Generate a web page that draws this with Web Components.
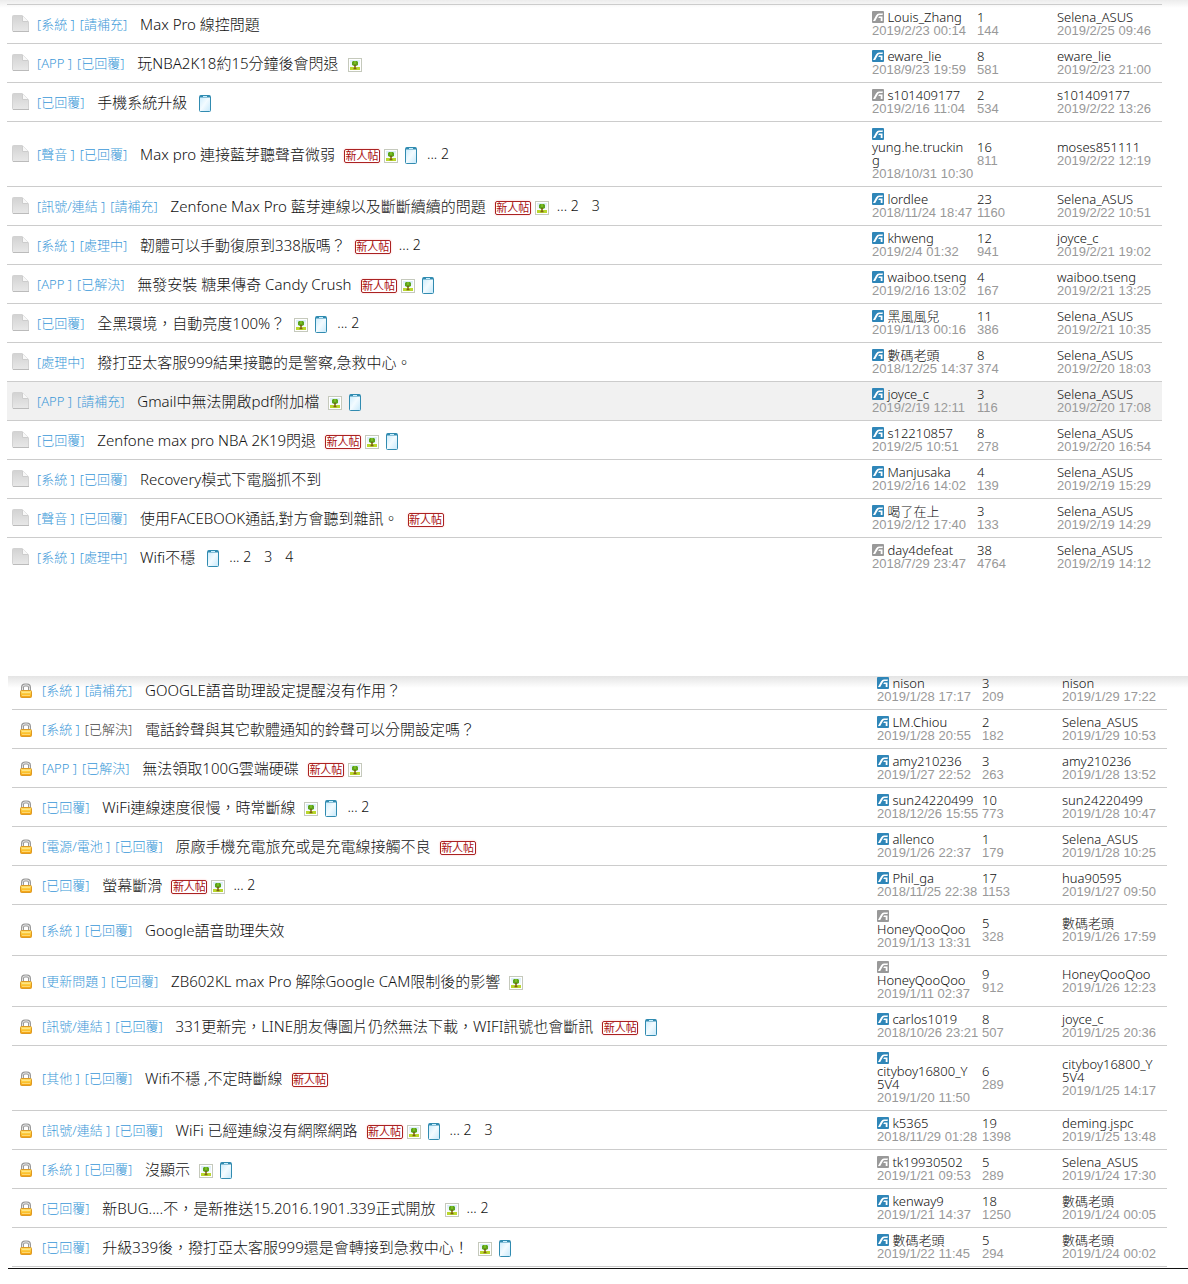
<!DOCTYPE html>
<html lang="zh-Hant">
<head>
<meta charset="utf-8">
<meta name="viewport" content="width=device-width, initial-scale=1">
<title>ZenFone Max Pro</title>
<style>
    body {
        margin: 0;
        background: #fff;
        color: #111;
        font-family: "Noto Sans", "Noto Sans CJK TC", sans-serif;
        font-weight: 300;
    }
</style>
</head>
<body>
<forum-panel>
    <thread-list name="open" status="page"></thread-list>
</forum-panel>
<forum-panel continued>
    <thread-list name="locked" status="lock"></thread-list>
</forum-panel>

<script>
'use strict';

(function() {
    // tags, title, marks, extra pages, author, active member, posted, replies, views, last poster, last post, row kind
    const threads = {
        open: [
            ['系統 |請補充', 'Max Pro 線控問題', '', '', 'Louis_Zhang', 0, '2019/2/23 00:14', 1, 144, 'Selena_ASUS', '2019/2/25 09:46'],
            ['APP |已回覆', '玩NBA2K18約15分鐘後會閃退', 'image', '', 'eware_lie', 1, '2018/9/23 19:59', 8, 581, 'eware_lie', '2019/2/23 21:00'],
            ['已回覆', '手機系統升級', 'phone', '', 's101409177', 0, '2019/2/16 11:04', 2, 534, 's101409177', '2019/2/22 13:26'],
            ['聲音 |已回覆', 'Max pro 連接藍芽聽聲音微弱', 'new image phone', '2', 'yung.he.trucking', 1, '2018/10/31 10:30', 16, 811, 'moses851111', '2019/2/22 12:19', 'tall'],
            ['訊號/連結 |請補充', 'Zenfone Max Pro 藍芽連線以及斷斷續續的問題', 'new image', '2 3', 'lordlee', 1, '2018/11/24 18:47', 23, 1160, 'Selena_ASUS', '2019/2/22 10:51'],
            ['系統 |處理中', '韌體可以手動復原到338版嗎？', 'new', '2', 'khweng', 1, '2019/2/4 01:32', 12, 941, 'joyce_c', '2019/2/21 19:02'],
            ['APP |已解決', '無發安裝 糖果傳奇 Candy Crush', 'new image phone', '', 'waiboo.tseng', 1, '2019/2/16 13:02', 4, 167, 'waiboo.tseng', '2019/2/21 13:25'],
            ['已回覆', '全黑環境，自動亮度100%？', 'image phone', '2', '黑風風兒', 1, '2019/1/13 00:16', 11, 386, 'Selena_ASUS', '2019/2/21 10:35'],
            ['處理中', '撥打亞太客服999結果接聽的是警察,急救中心。', '', '', '數碼老頭', 1, '2018/12/25 14:37', 8, 374, 'Selena_ASUS', '2019/2/20 18:03'],
            ['APP |請補充', 'Gmail中無法開啟pdf附加檔', 'image phone', '', 'joyce_c', 1, '2019/2/19 12:11', 3, 116, 'Selena_ASUS', '2019/2/20 17:08', 'current'],
            ['已回覆', 'Zenfone max pro NBA 2K19閃退', 'new image phone', '', 's12210857', 1, '2019/2/5 10:51', 8, 278, 'Selena_ASUS', '2019/2/20 16:54'],
            ['系統 |已回覆', 'Recovery模式下電腦抓不到', '', '', 'Manjusaka', 1, '2019/2/16 14:02', 4, 139, 'Selena_ASUS', '2019/2/19 15:29'],
            ['聲音 |已回覆', '使用FACEBOOK通話,對方會聽到雜訊。', 'new', '', '喝了在上', 1, '2019/2/12 17:40', 3, 133, 'Selena_ASUS', '2019/2/19 14:29'],
            ['系統 |處理中', 'Wifi不穩', 'phone', '2 3 4', 'day4defeat', 0, '2018/7/29 23:47', 38, 4764, 'Selena_ASUS', '2019/2/19 14:12']
        ],
        locked: [
            ['系統 |請補充', 'GOOGLE語音助理設定提醒沒有作用？', '', '', 'nison', 1, '2019/1/28 17:17', 3, 209, 'nison', '2019/1/29 17:22'],
            ['系統 |已解決', '電話鈴聲與其它軟體通知的鈴聲可以分開設定嗎？', '', '', 'LM.Chiou', 1, '2019/1/28 20:55', 2, 182, 'Selena_ASUS', '2019/1/29 10:53', 'visited'],
            ['APP |已解決', '無法領取100G雲端硬碟', 'new image', '', 'amy210236', 1, '2019/1/27 22:52', 3, 263, 'amy210236', '2019/1/28 13:52'],
            ['已回覆', 'WiFi連線速度很慢，時常斷線', 'image phone', '2', 'sun24220499', 1, '2018/12/26 15:55', 10, 773, 'sun24220499', '2019/1/28 10:47'],
            ['電源/電池 |已回覆', '原廠手機充電旅充或是充電線接觸不良', 'new', '', 'allenco', 1, '2019/1/26 22:37', 1, 179, 'Selena_ASUS', '2019/1/28 10:25'],
            ['已回覆', '螢幕斷滑', 'new image', '2', 'Phil_ga', 1, '2018/11/25 22:38', 17, 1153, 'hua90595', '2019/1/27 09:50'],
            ['系統 |已回覆', 'Google語音助理失效', '', '', 'HoneyQooQoo', 0, '2019/1/13 13:31', 5, 328, '數碼老頭', '2019/1/26 17:59'],
            ['更新問題 |已回覆', 'ZB602KL max Pro 解除Google CAM限制後的影響', 'image', '', 'HoneyQooQoo', 0, '2019/1/11 02:37', 9, 912, 'HoneyQooQoo', '2019/1/26 12:23'],
            ['訊號/連結 |已回覆', '331更新完，LINE朋友傳圖片仍然無法下載，WIFI訊號也會斷訊', 'new phone', '', 'carlos1019', 1, '2018/10/26 23:21', 8, 507, 'joyce_c', '2019/1/25 20:36'],
            ['其他 |已回覆', 'Wifi不穩 ,不定時斷線', 'new', '', 'cityboy16800_Y5V4', 1, '2019/1/20 11:50', 6, 289, 'cityboy16800_Y5V4', '2019/1/25 14:17', 'tall'],
            ['訊號/連結 |已回覆', 'WiFi 已經連線沒有網際網路', 'new image phone', '2 3', 'k5365', 1, '2018/11/29 01:28', 19, 1398, 'deming.jspc', '2019/1/25 13:48'],
            ['系統 |已回覆', '沒顯示', 'image phone', '', 'tk19930502', 0, '2019/1/21 09:53', 5, 289, 'Selena_ASUS', '2019/1/24 17:30'],
            ['已回覆', '新BUG....不，是新推送15.2016.1901.339正式開放', 'image', '2', 'kenway9', 1, '2019/1/21 14:37', 18, 1250, '數碼老頭', '2019/1/24 00:05'],
            ['已回覆', '升級339後，撥打亞太客服999還是會轉接到急救中心！', 'image phone', '', '數碼老頭', 1, '2019/1/22 11:45', 5, 294, '數碼老頭', '2019/1/24 00:02']
        ]
    };

    const icons = {
        page: `<svg width="18" height="18" viewBox="0 0 18 18">
            <defs><linearGradient id="g" x2="0" y2="1"><stop stop-color="#d2d2d2"/><stop offset="1" stop-color="#e8e8e8"/></linearGradient></defs>
            <path d="M1.500.5h9l6 6v10h-15q-1 0-1-1v-14q0-1 1-1z" fill="url(#g)" stroke="#d2d2d2"/>
            <path d="M10.500.5l6 6h-6z" fill="#f8f8f8" stroke="#e4e4e4"/>
            <path d="M10.500 1v5.500H16" fill="none" stroke="#ccc"/>
            <path d="M1 16.500h16" stroke="#bbb"/></svg>`,
        lock: `<svg width="14" height="16" viewBox="0 0 14 16">
            <defs><linearGradient id="g" x2="0" y2="1"><stop stop-color="#fee277"/><stop offset=".5" stop-color="#fdc735"/><stop offset="1" stop-color="#f49b0b"/></linearGradient></defs>
            <path d="M3.500 8V4.500Q3.500 2 6 2h2q2.500 0 2.500 2.500V8" fill="none" stroke="#999" stroke-width="3"/>
            <path d="M3.500 8V4.500Q3.500 2 6 2h2q2.500 0 2.500 2.500V8" fill="none" stroke="#e8e8e8"/>
            <rect x="1.500" y="7.500" width="11" height="7" rx="1" fill="url(#g)" stroke="#dc9a25"/>
            <path d="M3 9.500h8M3 12.500h8" stroke="#fff1a8" opacity=".6"/></svg>`,
        image: `<svg width="14" height="14" viewBox="0 0 14 14">
            <defs><linearGradient id="g" x2="0" y2="1"><stop stop-color="#d8edf8"/><stop offset="1" stop-color="#fff"/></linearGradient></defs>
            <rect x=".5" y=".5" width="13" height="13" fill="#fff" stroke="#c5c9bc"/>
            <path d="M2 2h10v8H2z" fill="url(#g)"/><path d="M2 9h10v3H2z" fill="#b9d72c"/>
            <path d="M5 3h4l1 1v3L8 8H6L4 7V4z" fill="#5ba31b"/><path d="M6 3h2v3H6z" fill="#79ba22"/>
            <path d="M6.500 7h1v3l1 1h-3l1-1z" fill="#7b5a13" stroke="#7b5a13" stroke-width=".5"/></svg>`,
        phone: `<svg width="12" height="17" viewBox="0 0 12 17">
            <defs><linearGradient id="g" x2="1" y2="1"><stop stop-color="#c8eafb"/><stop offset=".5" stop-color="#f3fbff"/><stop offset="1" stop-color="#c5e8fa"/></linearGradient></defs>
            <rect x=".5" y=".5" width="11" height="16" rx="1" fill="url(#g)" stroke="#318bb0"/>
            <path d="M1 1.500h10" stroke="#318bb0" stroke-width="2"/><path d="M4 1.500h4" stroke="#c9efff"/></svg>`,
        member: `<svg width="12" height="12" viewBox="0 0 12 12">
            <rect width="12" height="12" rx="1" fill="currentColor"/>
            <path d="M1 10L4 4.500Q5.200 2.500 7 2.500h4L10.500 4H7.800Q6.500 4 5.700 5.400L3.200 10z" fill="#fff"/>
            <path d="M7 5.500h3.500V10H8.700V7H6.300z" fill="#fff"/></svg>`
    };

    class ForumPanel extends HTMLElement {
        constructor() {
            super();
            this.attachShadow({ mode: 'open' }).innerHTML = `
            <style>
                :host {
                    display: block;
                    padding: 4px 26px 0 7px;
                    background: linear-gradient(#ececec, #fff) top / 100% 8px no-repeat;
                }

                :host([continued]) {
                    margin: 99px 0 0 8px;
                    padding: 0 21px 1px 4px;
                    border-bottom: 1px solid #111;
                    background: linear-gradient(#e4e4e4, #fff) top / 100% 12px no-repeat;
                    overflow: hidden;
                }

                /* the first row continues from above the panel edge */
                :host([continued]) ::slotted(thread-list) {
                    margin-top: -5px;
                }
            </style>
            <slot></slot>
            `;
        }
    }

    class ForumIcon extends HTMLElement {
        constructor() {
            super();
            this.attachShadow({ mode: 'open' });
        }

        connectedCallback() {
            this.shadowRoot.innerHTML = `
            <style>
                :host {
                    display: inline-flex;
                    flex: none;
                    color: #2f86b8;
                }

                :host([muted]) {
                    color: #999;
                }

                svg {
                    display: block;
                }
            </style>
            ${icons[this.getAttribute('name')]}
            `;
        }
    }

    class NewcomerBadge extends HTMLElement {
        constructor() {
            super();
            this.attachShadow({ mode: 'open' }).innerHTML = `
            <style>
                :host {
                    box-sizing: border-box;
                    flex: none;
                    width: 36px;
                    height: 14px;
                    border: 1px solid #a22;
                    border-radius: 2px;
                    box-shadow: 0 0 2px #fbb;
                    color: #a11;
                    font-size: 11px;
                    font-weight: 400;
                    line-height: 12px;
                    display: flex;
                    justify-content: center;
                }
            </style>
            <span>新人帖</span>
            `;
        }
    }

    class PostMeta extends HTMLElement {
        constructor() {
            super();
            this.attachShadow({ mode: 'open' });
        }

        connectedCallback() {
            const member = this.getAttribute('member');
            this.shadowRoot.innerHTML = `
            <style>
                :host {
                    display: block;
                    font-size: 13px;
                    line-height: 13px;
                }

                .name {
                    overflow-wrap: break-word;
                }

                a {
                    color: inherit;
                    text-decoration: none;
                }

                forum-icon {
                    height: 12px;
                    margin-top: -2px;
                    vertical-align: -1px;
                }

                .detail {
                    color: #999;
                    font-family: "Liberation Sans", Arial, sans-serif;
                    font-weight: 400;
                    white-space: nowrap;
                }
            </style>
            <div class="name">${member !== null
                ? `<forum-icon name="member" ${member === '0' ? 'muted' : ''}></forum-icon> `
                : ''}${this.hasAttribute('plain') ? '<slot></slot>' : '<a href="#"><slot></slot></a>'}</div>
            <div class="detail">${this.getAttribute('detail')}</div>
            `;
        }
    }

    class ThreadSubject extends HTMLElement {
        constructor() {
            super();
            this.attachShadow({ mode: 'open' });
        }

        connectedCallback() {
            const tags = this.getAttribute('tags').split('|');
            const marks = this.getAttribute('marks').split(' ').filter(Boolean);
            const pages = this.getAttribute('pages').split(' ').filter(Boolean);

            this.shadowRoot.innerHTML = `
            <style>
                :host {
                    display: flex;
                    align-items: center;
                    font-size: 15px;
                    line-height: 20px;
                }

                a {
                    color: inherit;
                    text-decoration: none;
                }

                .tags {
                    display: flex;
                    gap: 5px;
                    margin-right: 13px;
                    padding-top: 1px;
                    color: #3a98d8;
                    font-size: 13px;
                }

                :host([visited]) .tags a:last-child {
                    color: #444;
                }

                .marks {
                    display: flex;
                    align-items: center;
                    gap: 4px;
                    margin-left: 9px;
                    padding-top: 4px;
                }

                forum-icon[name="phone"] {
                    margin: 0 2px 0 3px;
                }

                .pages {
                    display: flex;
                    gap: 13px;
                    margin-left: 8px;
                    font-size: 14px;
                }
            </style>
            <span class="tags">${tags.map(tag => `<a href="#">[${tag}]</a>`).join('')}</span>
            <a href="#"><slot></slot></a>
            ${marks.length
                ? `<span class="marks">${marks.map(mark => mark === 'new'
                    ? '<newcomer-badge></newcomer-badge>'
                    : `<forum-icon name="${mark}"></forum-icon>`).join('')}</span>`
                : ''}
            ${pages.length
                ? `<span class="pages">${pages.map((page, i) => `<span>${i ? '' : '... '}<a href="#">${page}</a></span>`).join('')}</span>`
                : ''}
            `;
        }
    }

    class ThreadList extends HTMLElement {
        constructor() {
            super();
            this.attachShadow({ mode: 'open' });
        }

        connectedCallback() {
            const status = this.getAttribute('status');
            this.shadowRoot.innerHTML = `
            <style>
                :host {
                    display: block;
                }

                table {
                    width: 100%;
                    table-layout: fixed;
                    border-spacing: 0;
                }

                :host([name="open"]) table {
                    border-top: 1px solid #ccc;
                }

                td {
                    box-sizing: border-box;
                    height: 39px;
                    padding: 5px 0 6px;
                    border-bottom: 1px solid #ccc;
                    vertical-align: middle;
                }

                :host([name="open"]) tr:last-child td {
                    border-bottom-color: transparent;
                }

                .tall td {
                    height: 65px;
                }

                .current {
                    background: #f1f1f1;
                }

                .status {
                    width: 30px;
                }

                .status forum-icon {
                    display: flex;
                    padding-left: 5px;
                }

                .status forum-icon[name="lock"] {
                    padding: 3px 0 0 7px;
                }

                .author {
                    width: 105px;
                    padding-right: 8px;
                }

                .count {
                    width: 80px;
                }

                .last {
                    width: 105px;
                    padding-right: 8px;
                }
            </style>
            <table>
                <tbody>
                ${threads[this.getAttribute('name')].map(([tags, title, marks, pages, author, active, posted, replies, views, last, lastDate, kind]) => `
                    <tr class="${kind || ''}">
                        <td class="status"><forum-icon name="${status}"></forum-icon></td>
                        <td><thread-subject tags="${tags}" marks="${marks}" pages="${pages}" ${kind === 'visited' ? 'visited' : ''}>${title}</thread-subject></td>
                        <td class="author"><post-meta member="${active}" detail="${posted}">${author}</post-meta></td>
                        <td class="count"><post-meta plain detail="${views}">${replies}</post-meta></td>
                        <td class="last"><post-meta detail="${lastDate}">${last}</post-meta></td>
                    </tr>
                `).join('')}
                </tbody>
            </table>
            `;
        }
    }

    customElements.define('forum-icon', ForumIcon);
    customElements.define('newcomer-badge', NewcomerBadge);
    customElements.define('post-meta', PostMeta);
    customElements.define('thread-subject', ThreadSubject);
    customElements.define('thread-list', ThreadList);
    customElements.define('forum-panel', ForumPanel);
})();
</script>
</body>
</html>
